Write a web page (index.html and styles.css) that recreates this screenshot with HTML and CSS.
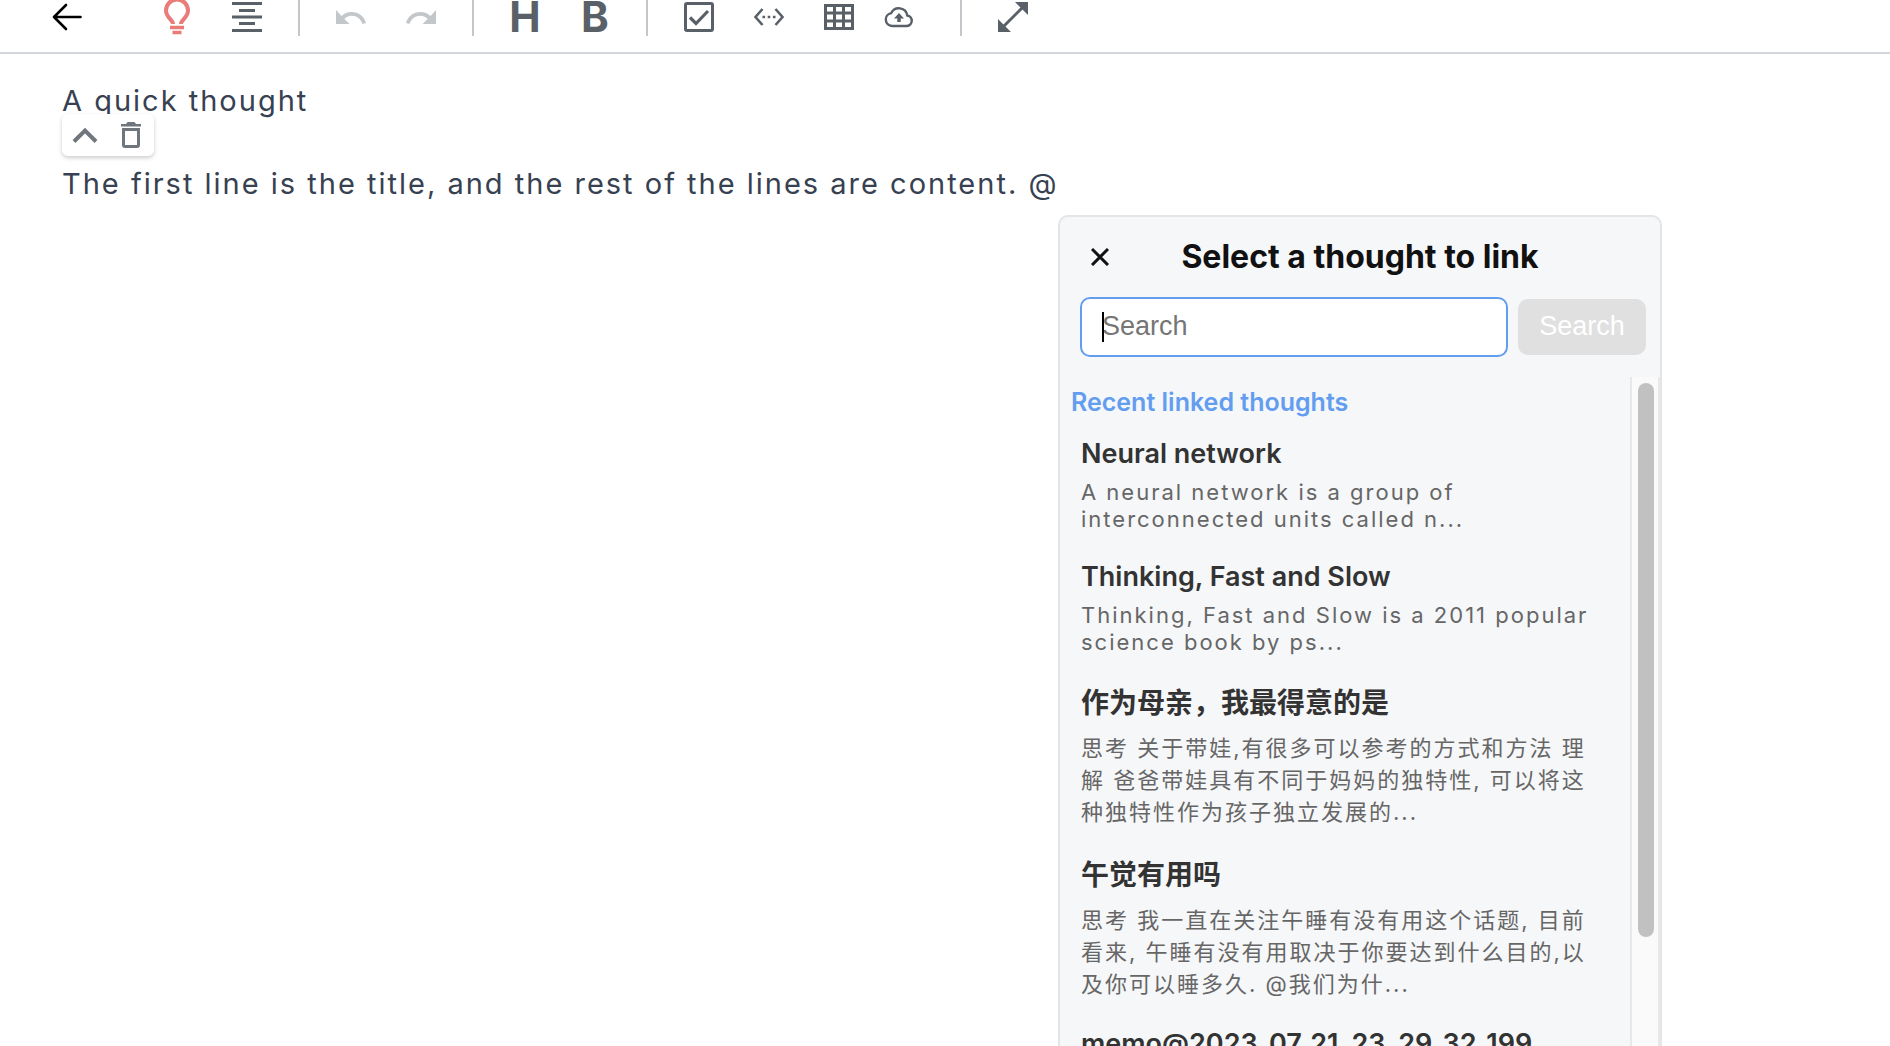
FILE: index.html
```html
<!DOCTYPE html>
<html lang="en">
<head>
<meta charset="utf-8">
<title>A quick thought</title>
<link rel="stylesheet" href="styles.css">
</head>
<body>
<header class="toolbar">
  <button class="tool tool-back" aria-label="Back"><svg width="30" height="30" viewBox="0 0 30 30" fill="none" stroke="#000" stroke-width="2.600" stroke-linecap="round" stroke-linejoin="round"><path d="M28.500 15H2M14 3L2 15l12 12"/></svg></button>
  <button class="tool tool-idea" aria-label="Idea"><svg width="30" height="38" viewBox="0 0 30 38" fill="none" stroke="#e97c79" stroke-width="4"><path d="M11 26c0-4-7-6.500-7-13.500a11 11 0 0 1 22 0C26 19.500 19 22 19 26"/><path d="M8 29.500h14M10.500 34.500h9" stroke-width="3.500"/></svg></button>
  <button class="tool" aria-label="Center"><svg width="30" height="30" viewBox="0 0 30 30" fill="currentColor"><path d="M0 0h30v3H0zM7 7h16v3H7zM0 13.500h30v3H0zM7 20h16v3H7zM0 27h30v3H0z"/></svg></button>
  <span class="divider"></span>
  <button class="tool tool-off" aria-label="Undo"><svg width="30" height="30" viewBox="0 0 30 30"><path fill="currentColor" d="M0 8v14h13.500l-5.200-5C10 15.200 12.500 13.800 15.500 13.800c5.200 0 9.500 3.400 11 8.200l3.500-1C28.500 14.500 22.500 10 15.500 10c-4 0-7.300 1.500-10 4z"/></svg></button>
  <button class="tool tool-off" aria-label="Redo"><svg width="30" height="30" viewBox="0 0 30 30"><path fill="currentColor" transform="matrix(-1 0 0 1 30 0)" d="M0 8v14h13.500l-5.200-5C10 15.200 12.500 13.800 15.500 13.800c5.200 0 9.500 3.400 11 8.200l3.500-1C28.500 14.500 22.500 10 15.500 10c-4 0-7.300 1.500-10 4z"/></svg></button>
  <span class="divider"></span>
  <button class="tool tool-letter" aria-label="Heading">H</button>
  <button class="tool tool-letter" aria-label="Bold">B</button>
  <span class="divider"></span>
  <button class="tool" aria-label="Checklist"><svg width="30" height="30" viewBox="0 0 30 30" fill="none" stroke="currentColor"><rect x="1.500" y="1.500" width="27" height="27" rx="1.500" stroke-width="3"/><path d="M6 15.500l6 6L24 9" stroke-width="3.200"/></svg></button>
  <button class="tool" aria-label="Code"><svg width="30" height="30" viewBox="0 0 30 30" fill="none" stroke="currentColor" stroke-width="2.600"><path d="M8.500 7l-7 8 7 8M21.500 7l7 8-7 8"/><path d="M8.500 15h2.600M13.700 15h2.600M18.900 15h2.600"/></svg></button>
  <button class="tool" aria-label="Table"><svg width="30" height="30" viewBox="0 0 30 30" fill="none" stroke="currentColor" stroke-width="3"><path d="M1.500 3.500h27v23h-27zM1.500 11h27M1.500 19h27M10.500 3.500v23M19.500 3.500v23"/></svg></button>
  <button class="tool tool-upload" aria-label="Upload"><svg width="30" height="30" viewBox="0 0 30 30"><path fill="none" stroke="currentColor" stroke-width="2.400" d="M23 24H8a6.500 6.500 0 0 1-.8-12.900A8.500 8.500 0 0 1 23.300 13.500 5.300 5.300 0 0 1 23 24z"/><path fill="currentColor" d="M15 11l5 5.500h-3.300V20h-3.400v-3.500H10z"/></svg></button>
  <span class="divider"></span>
  <button class="tool" aria-label="Expand"><svg width="30" height="30" viewBox="0 0 30 30"><path d="M5 25L25 5" stroke="currentColor" stroke-width="3"/><path fill="currentColor" d="M17 0h13v13zM0 17v13h13z"/></svg></button>
</header>
<main class="editor">
  <div class="line">A quick thought
    <div class="line-tools">
      <button class="line-tool" aria-label="Collapse"><svg width="26" height="28" viewBox="0 0 26 28"><path d="M2 20.500L13 9.500l11 11" fill="none" stroke="currentColor" stroke-width="4"/></svg></button>
      <button class="line-tool" aria-label="Delete"><svg width="20" height="28" viewBox="0 0 20 28"><path d="M0 3h5l1.500-2h7L15 3h5v2.500H0z" fill="currentColor"/><path d="M2.500 8.500h15v15.500a1.500 1.500 0 0 1-1.500 1.500h-12a1.500 1.500 0 0 1-1.500-1.500z" fill="none" stroke="currentColor" stroke-width="3"/></svg></button>
    </div>
  </div>
  <div class="line">The first line is the title, and the rest of the lines are content. @</div>
  <section class="picker" aria-labelledby="picker-title">
    <div class="picker-head">
      <button class="close" aria-label="Close"><svg width="18" height="18" viewBox="0 0 18 18"><path d="M1 1l16 16M17 1L1 17" stroke="#111" stroke-width="3" fill="none"/></svg></button>
      <h2 class="picker-title" id="picker-title">Select a thought to link</h2>
    </div>
    <form class="search">
      <div class="field"><input class="search-input" type="text" placeholder="Search" aria-label="Search thoughts"><span class="caret"></span></div>
      <button class="search-button" type="button">Search</button>
    </form>
    <div class="results">
      <div class="list">
        <h3 class="list-label">Recent linked thoughts</h3>
        <a class="item" href="#"><span class="item-title">Neural network</span><span class="item-text">A neural network is a group of interconnected units called n...</span></a>
        <a class="item" href="#"><span class="item-title">Thinking, Fast and Slow</span><span class="item-text">Thinking, Fast and Slow is a 2011 popular science book by ps...</span></a>
        <a class="item item-zh" href="#" lang="zh"><span class="item-title">作为母亲，我最得意的是</span><span class="item-text">思考 关于带娃,有很多可以参考的方式和方法 理解 爸爸带娃具有不同于妈妈的独特性, 可以将这种独特性作为孩子独立发展的...</span></a>
        <a class="item item-zh" href="#" lang="zh"><span class="item-title">午觉有用吗</span><span class="item-text">思考 我一直在关注午睡有没有用这个话题, 目前看来, 午睡有没有用取决于你要达到什么目的,以及你可以睡多久. @我们为什...</span></a>
        <a class="item" href="#"><span class="item-title">memo@2023_07_21_23_29_32_199</span></a>
      </div>
      <div class="scrollbar"><div class="thumb"></div></div>
    </div>
  </section>
</main>
</body>
</html>
```
FILE: styles.css
```css
* { box-sizing: border-box; }
body {
  margin: 0;
  height: 100vh;
  display: flex;
  flex-direction: column;
  overflow: hidden;
  background: #fff;
  font-family: Inter, "Noto Sans CJK SC", sans-serif;
}
button { border: 0; padding: 0; background: none; font: inherit; color: inherit; }
svg { display: block; }

.toolbar {
  flex: none;
  display: flex;
  align-items: center;
  height: 54px;
  padding: 0 32px 18px;
  border-bottom: 2px solid #d3d6da;
  color: #596067;
}
.tool { width: 70px; height: 34px; display: flex; align-items: center; justify-content: center; }
.tool-back { margin-right: 40px; }
.tool-off { color: #c3c7ca; }
.tool-letter { font-size: 42px; line-height: 34px; font-weight: 700; }
.tool-upload { width: 50px; margin-right: 20px; }
.divider { width: 2px; height: 38px; margin: 0 16px; background: #c3c7cb; }

.editor { flex: 1; position: relative; padding: 19px 62px; color: #374151; }
.line {
  position: relative;
  margin-bottom: 27px;
  font-size: 29px;
  line-height: 56px;
  letter-spacing: 2px;
}
.line-tools {
  position: absolute;
  left: 0;
  top: 41px;
  z-index: 1;
  display: flex;
  gap: 23px;
  padding: 7px 13px 7px 10px;
  border-radius: 6px;
  background: #fff;
  box-shadow: 0 2px 4px rgba(0, 0, 0, .2);
  color: #6f767d;
}

.picker {
  position: absolute;
  left: 1058px;
  top: 161px;
  width: 604px;
  border: 2px solid #e4e5e6;
  border-radius: 10px;
  background: #f6f7f9;
  color: #333;
}
.picker-head { position: relative; display: flex; align-items: center; justify-content: center; height: 80px; }
.close { position: absolute; left: 31px; top: 31px; }
.picker-title { margin: 0; font-size: 32px; line-height: 40px; font-weight: 700; color: #111; }
.search { display: flex; align-items: center; gap: 10px; padding: 0 14px 0 20px; font-family: "Liberation Sans", Arial, sans-serif; font-size: 27px; }
.field { flex: 1; position: relative; }
.search-input {
  display: block;
  width: 100%;
  height: 60px;
  padding: 0 20px 2px;
  border: 2px solid #629df0;
  border-radius: 10px;
  background: #fff;
  font: inherit;
}
.search-input::placeholder { color: #757575; }
.caret { position: absolute; left: 22px; top: 15px; width: 2px; height: 30px; background: #000; }
.search-button { width: 128px; height: 56px; padding-bottom: 2px; border-radius: 10px; background: #e0e0e0; color: #fff; }
.results { display: flex; margin-top: 20px; }
.list { flex: 1; padding: 10px 34px 0 11px; }
.list-label { margin: 0 0 20px; font-size: 25px; line-height: 30px; font-weight: 600; color: #629df0; }
.item { display: block; margin: 0 0 27px 10px; color: #333; text-decoration: none; }
.item-title { display: block; width: 468px; overflow: hidden; white-space: nowrap; font-size: 27px; line-height: 34px; font-weight: 600; }
.item-text { display: block; margin-top: 8px; font-size: 22px; line-height: 27px; letter-spacing: 2px; color: #666; }
.item-zh .item-title { font-size: 28px; line-height: 41px; }
.item-zh .item-text { line-height: 32px; }
.scrollbar { width: 30px; padding: 6px 4px 0 6px; border: solid #e8e8e8; border-width: 0 2px; background: #fafafa; }
.thumb { width: 16px; height: 554px; border-radius: 8px; background: #c1c1c1; }
```
